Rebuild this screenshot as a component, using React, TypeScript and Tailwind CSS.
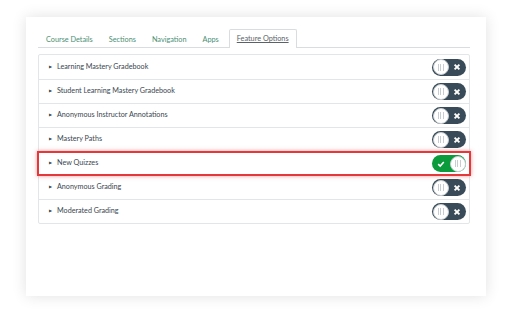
const features = [
    { name: 'Learning Mastery Gradebook', on: false },
    { name: 'Student Learning Mastery Gradebook', on: false },
    { name: 'Anonymous Instructor Annotations', on: false },
    { name: 'Mastery Paths', on: false },
    { name: 'New Quizzes', on: true, highlight: true },
    { name: 'Anonymous Grading', on: false },
    { name: 'Moderated Grading', on: false },
];

const tabs = ['Course Details', 'Sections', 'Navigation', 'Apps'];

const Toggle = ({ on }: { on: boolean }) => {
    const knob = (
        <div className="w-[16px] h-[16px] rounded-full bg-white border border-[#c7cdd1] flex items-center justify-center gap-[1.5px]">
            <span className="w-px h-[7px] bg-[#c7cdd1]" />
            <span className="w-px h-[7px] bg-[#c7cdd1]" />
            <span className="w-px h-[7px] bg-[#c7cdd1]" />
        </div>
    );
    if (on) {
        return (
            <div className="w-[34px] h-[17px] rounded-full bg-[#0b9a3c] flex items-center justify-between pl-[5px] pr-[0.5px]">
                <svg width="8" height="8" viewBox="0 0 10 10">
                    <path d="M1.5 5.2 L4 7.5 L8.5 2.5" stroke="white" strokeWidth="2" fill="none" />
                </svg>
                {knob}
            </div>
        );
    }
    return (
        <div className="w-[34px] h-[17px] rounded-full bg-[#394b58] flex items-center justify-between pl-[0.5px] pr-[5px]">
            {knob}
            <svg width="8" height="8" viewBox="0 0 10 10">
                <path d="M2 2 L8 8 M8 2 L2 8" stroke="white" strokeWidth="2.4" fill="none" />
            </svg>
        </div>
    );
};

export default function App() {
    return (
        <div className="w-[512px] h-[312px] bg-white pt-[17px] pl-[26px]" style={{ fontFamily: 'Lato, "Liberation Sans", sans-serif' }}>
            <div className="w-[460px] h-[279px] bg-white shadow-[0_0_14px_rgba(0,0,0,0.12)] pt-[13px] pl-[12px] pr-[16px]">
                {/* tabs */}
                <div className="flex items-end h-[18px] border-b border-[#d9dde0] pl-[8px] text-[7.3px]">
                    {tabs.map((t) => (
                        <span key={t} className="text-[#4b8f74] mr-[16px] pb-[4px] leading-none">{t}</span>
                    ))}
                    <span className="ml-[-6px] h-[19px] mb-[-1px] px-[7px] border border-b-0 border-[#d9dde0] bg-white rounded-t-[2px] flex items-center text-[#5a6268] underline leading-none">
                        Feature Options
                    </span>
                </div>

                {/* feature list */}
                <div className="mt-[6px] border border-[#e3e6e8] rounded-[2px]">
                    {features.map((f, i) => (
                        <div
                            key={f.name}
                            className={`h-[24px] flex items-center justify-between pl-[10px] pr-[3px] ${i > 0 ? 'border-t border-[#e3e6e8]' : ''} ${f.highlight ? 'relative' : ''}`}
                        >
                            <div className="flex items-center gap-[5px] text-[7.2px] text-[#3a4750]">
                                <span className="text-[4px] text-[#3a4750]">▶</span>
                                <span>{f.name}</span>
                            </div>
                            <Toggle on={f.on} />
                            {f.highlight && (
                                <div className="absolute left-[-2px] right-[-2px] top-[-1px] bottom-[-1px] border-2 border-[#e5383b] shadow-[0_0_4px_rgba(229,56,59,0.5)] pointer-events-none" />
                            )}
                        </div>
                    ))}
                </div>
            </div>
        </div>
    );
}
